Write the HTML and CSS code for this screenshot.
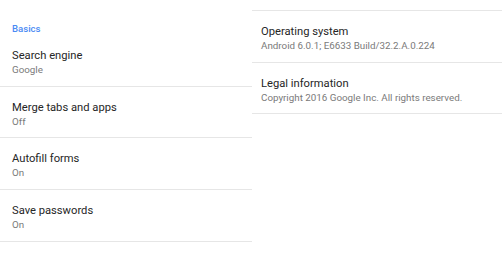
FILE: index.html
```html
<!DOCTYPE html>
<html>
<head>
<meta charset="utf-8">
<link rel="stylesheet" href="styles.css">
</head>
<body>
<div class="page">
  <section class="pane pane-left">
    <div class="header">Basics</div>
    <div class="row"><div class="title">Search engine</div><div class="sub">Google</div></div>
    <div class="row"><div class="title">Merge tabs and apps</div><div class="sub">Off</div></div>
    <div class="row"><div class="title">Autofill forms</div><div class="sub">On</div></div>
    <div class="row"><div class="title">Save passwords</div><div class="sub">On</div></div>
  </section>
  <section class="pane pane-right">
    <div class="row"><div class="title">Operating system</div><div class="sub">Android 6.0.1; E6633 Build/32.2.A.0.224</div></div>
    <div class="row"><div class="title">Legal information</div><div class="sub">Copyright 2016 Google Inc. All rights reserved.</div></div>
  </section>
</div>
</body>
</html>
```
FILE: styles.css
```css
html, body {
  margin: 0;
  padding: 0;
  background: #ffffff;
}
body {
  font-family: Roboto, "Noto Sans", sans-serif;
  width: 502px;
  height: 255px;
  overflow: hidden;
}
.page {
  display: flex;
}
.pane-left {
  width: 252px;
}
.pane-right {
  width: 250px;
  margin-top: 10px;
  border-top: 1px solid #e6e6e6;
}
.header {
  height: 35px;
  box-sizing: border-box;
  padding: 23px 0 0 12px;
  font-size: 9.6px;
  line-height: 11px;
  font-weight: 500;
  color: #4a8af4;
}
.row {
  height: 51.7px;
  box-sizing: border-box;
  border-bottom: 1px solid #e6e6e6;
  padding: 14px 0 0 12px;
}
.pane-right .row {
  padding-left: 9px;
  height: 51.5px;
}
.title {
  font-size: 11.2px;
  line-height: 14px;
  color: #262626;
}
.sub {
  font-size: 9.8px;
  line-height: 14px;
  color: #7a7a7a;
}
```
